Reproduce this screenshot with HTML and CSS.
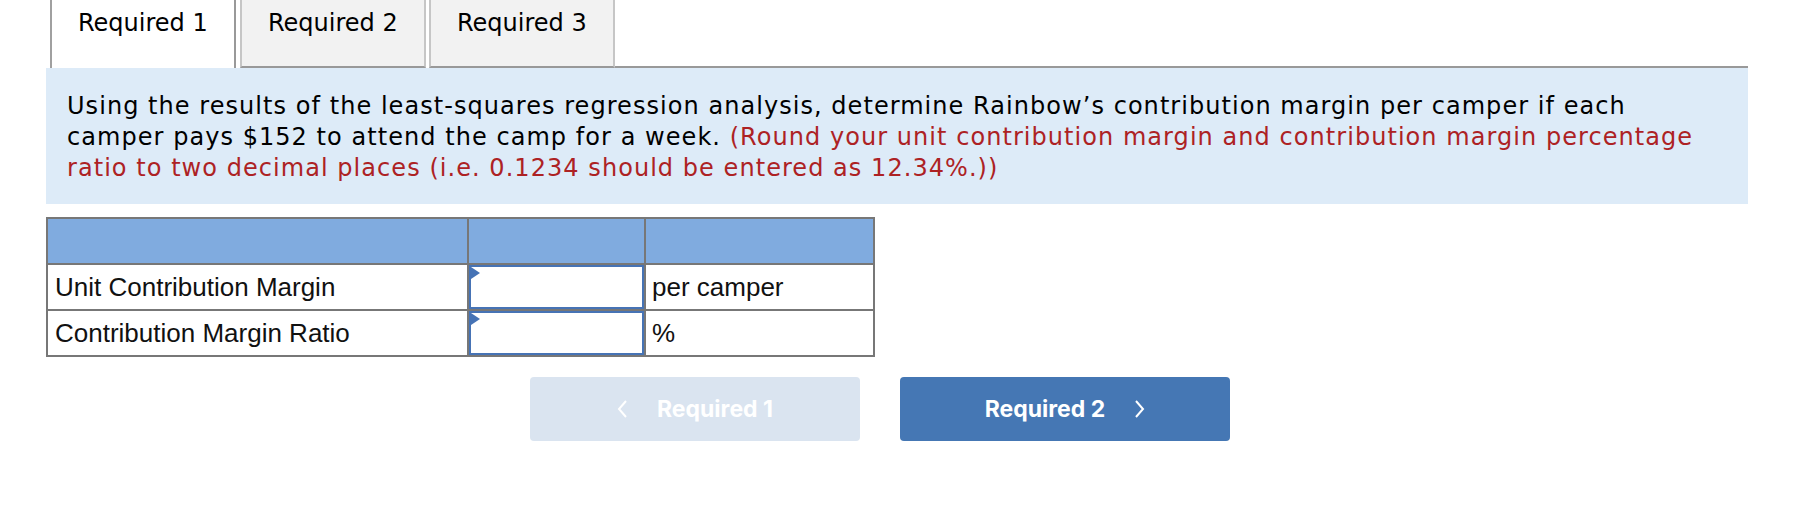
FILE: index.html
```html
<!DOCTYPE html>
<html lang="en">
<head>
<meta charset="utf-8">
<title>Required 1</title>
<link rel="stylesheet" href="styles.css">
</head>
<body>
<div class="page">
  <div class="tabs">
    <div class="tab active">Required 1</div>
    <div class="tab">Required 2</div>
    <div class="tab">Required 3</div>
    <div class="tab-fill"></div>
  </div>
  <div class="panel">
    <p class="question">Using the results of the least-squares regression analysis, determine Rainbow’s contribution margin per camper if each<br>camper pays $152 to attend the camp for a week. <span class="hint">(Round your unit contribution margin and contribution margin percentage<br>ratio to two decimal places (i.e. 0.1234 should be entered as 12.34%.))</span></p>
  </div>
  <table class="answers">
    <tr class="head"><th class="c1"></th><th class="c2"></th><th class="c3"></th></tr>
    <tr>
      <td class="c1 label">Unit Contribution Margin</td>
      <td class="c2 entry"><div class="input"><span class="flag"></span></div></td>
      <td class="c3 unit">per camper</td>
    </tr>
    <tr>
      <td class="c1 label">Contribution Margin Ratio</td>
      <td class="c2 entry"><div class="input"><span class="flag"></span></div></td>
      <td class="c3 unit">%</td>
    </tr>
  </table>
  <div class="nav">
    <button class="btn prev"><svg class="chev" width="10" height="18" viewBox="0 0 10 18"><polyline points="9,1 2,9 9,17" fill="none" stroke="#fff" stroke-width="2"/></svg><span>Required 1</span></button>
    <button class="btn next"><span>Required 2</span><svg class="chev" width="10" height="18" viewBox="0 0 10 18"><polyline points="1,1 8,9 1,17" fill="none" stroke="#fff" stroke-width="2"/></svg></button>
  </div>
</div>
</body>
</html>
```
FILE: styles.css
```css
html, body {
  margin: 0;
  padding: 0;
  background: #fff;
}
.page {
  padding-left: 46px;
  width: 1702px;
}
.tabs {
  display: flex;
  height: 68px;
  margin-left: 4px;
  font-family: "DejaVu Sans", Verdana, sans-serif;
  font-size: 24px;
  color: #000;
}
.tab {
  box-sizing: border-box;
  width: 186px;
  height: 68px;
  padding: 9px 0 0 26px;
  background: #f2f2f2;
  border-left: 2px solid #c6c6c6;
  border-right: 2px solid #c6c6c6;
  border-bottom: 2px solid #999;
  margin-left: 3px;
}
.tab.active {
  width: 186px;
  margin-left: 0;
  background: #fff;
  border-left: 2px solid #a0a0a0;
  border-right: 2px solid #999;
  border-bottom: 0;
  padding-left: 26px;
}
.tab.active + .tab {
  margin-left: 4px;
}
.tab-fill {
  flex: 1;
  border-bottom: 2px solid #999;
}
.panel {
  background: #ddebf8;
  height: 136px;
  box-sizing: border-box;
  padding: 23px 0 0 21px;
}
.question {
  margin: 0;
  font-family: "DejaVu Sans", Verdana, sans-serif;
  font-size: 24px;
  letter-spacing: 1.05px;
  line-height: 31px;
  color: #000;
  white-space: nowrap;
}
.hint {
  color: #ad2224;
}
.answers {
  margin-top: 13px;
  border-collapse: collapse;
  border: 2px solid #777;
  font-family: "Liberation Sans", Arial, sans-serif;
  font-size: 26px;
  color: #111;
}
.answers th, .answers td {
  border: 2px solid #777;
  padding: 0;
  height: 44px;
}
.answers .head th {
  background: #80abdf;
}
.c1 { width: 412px; }
.c2 { width: 175px; }
.c3 { width: 221px; }
.label {
  padding-left: 7px !important;
}
.unit {
  padding-left: 6px !important;
}
.input {
  box-sizing: border-box;
  height: 44px;
  border: 2px solid #4673b5;
  position: relative;
}
.flag {
  position: absolute;
  left: 0;
  top: 0;
  width: 0;
  height: 0;
  border-top: 6px solid transparent;
  border-bottom: 6px solid transparent;
  border-left: 9px solid #4673b5;
}
.nav {
  display: flex;
  gap: 40px;
  margin: 20px 0 0 484px;
}
.btn {
  width: 330px;
  height: 64px;
  border: 0;
  border-radius: 4px;
  display: flex;
  align-items: center;
  justify-content: center;
  gap: 30px;
  font-family: Inter, "Open Sans", sans-serif;
  font-weight: 700;
  font-size: 23px;
  color: #fff;
  padding: 0;
}
.btn.prev {
  background: #dae4f0;
}
.btn.next {
  background: #4577b4;
}
.chev {
  display: block;
}
```
